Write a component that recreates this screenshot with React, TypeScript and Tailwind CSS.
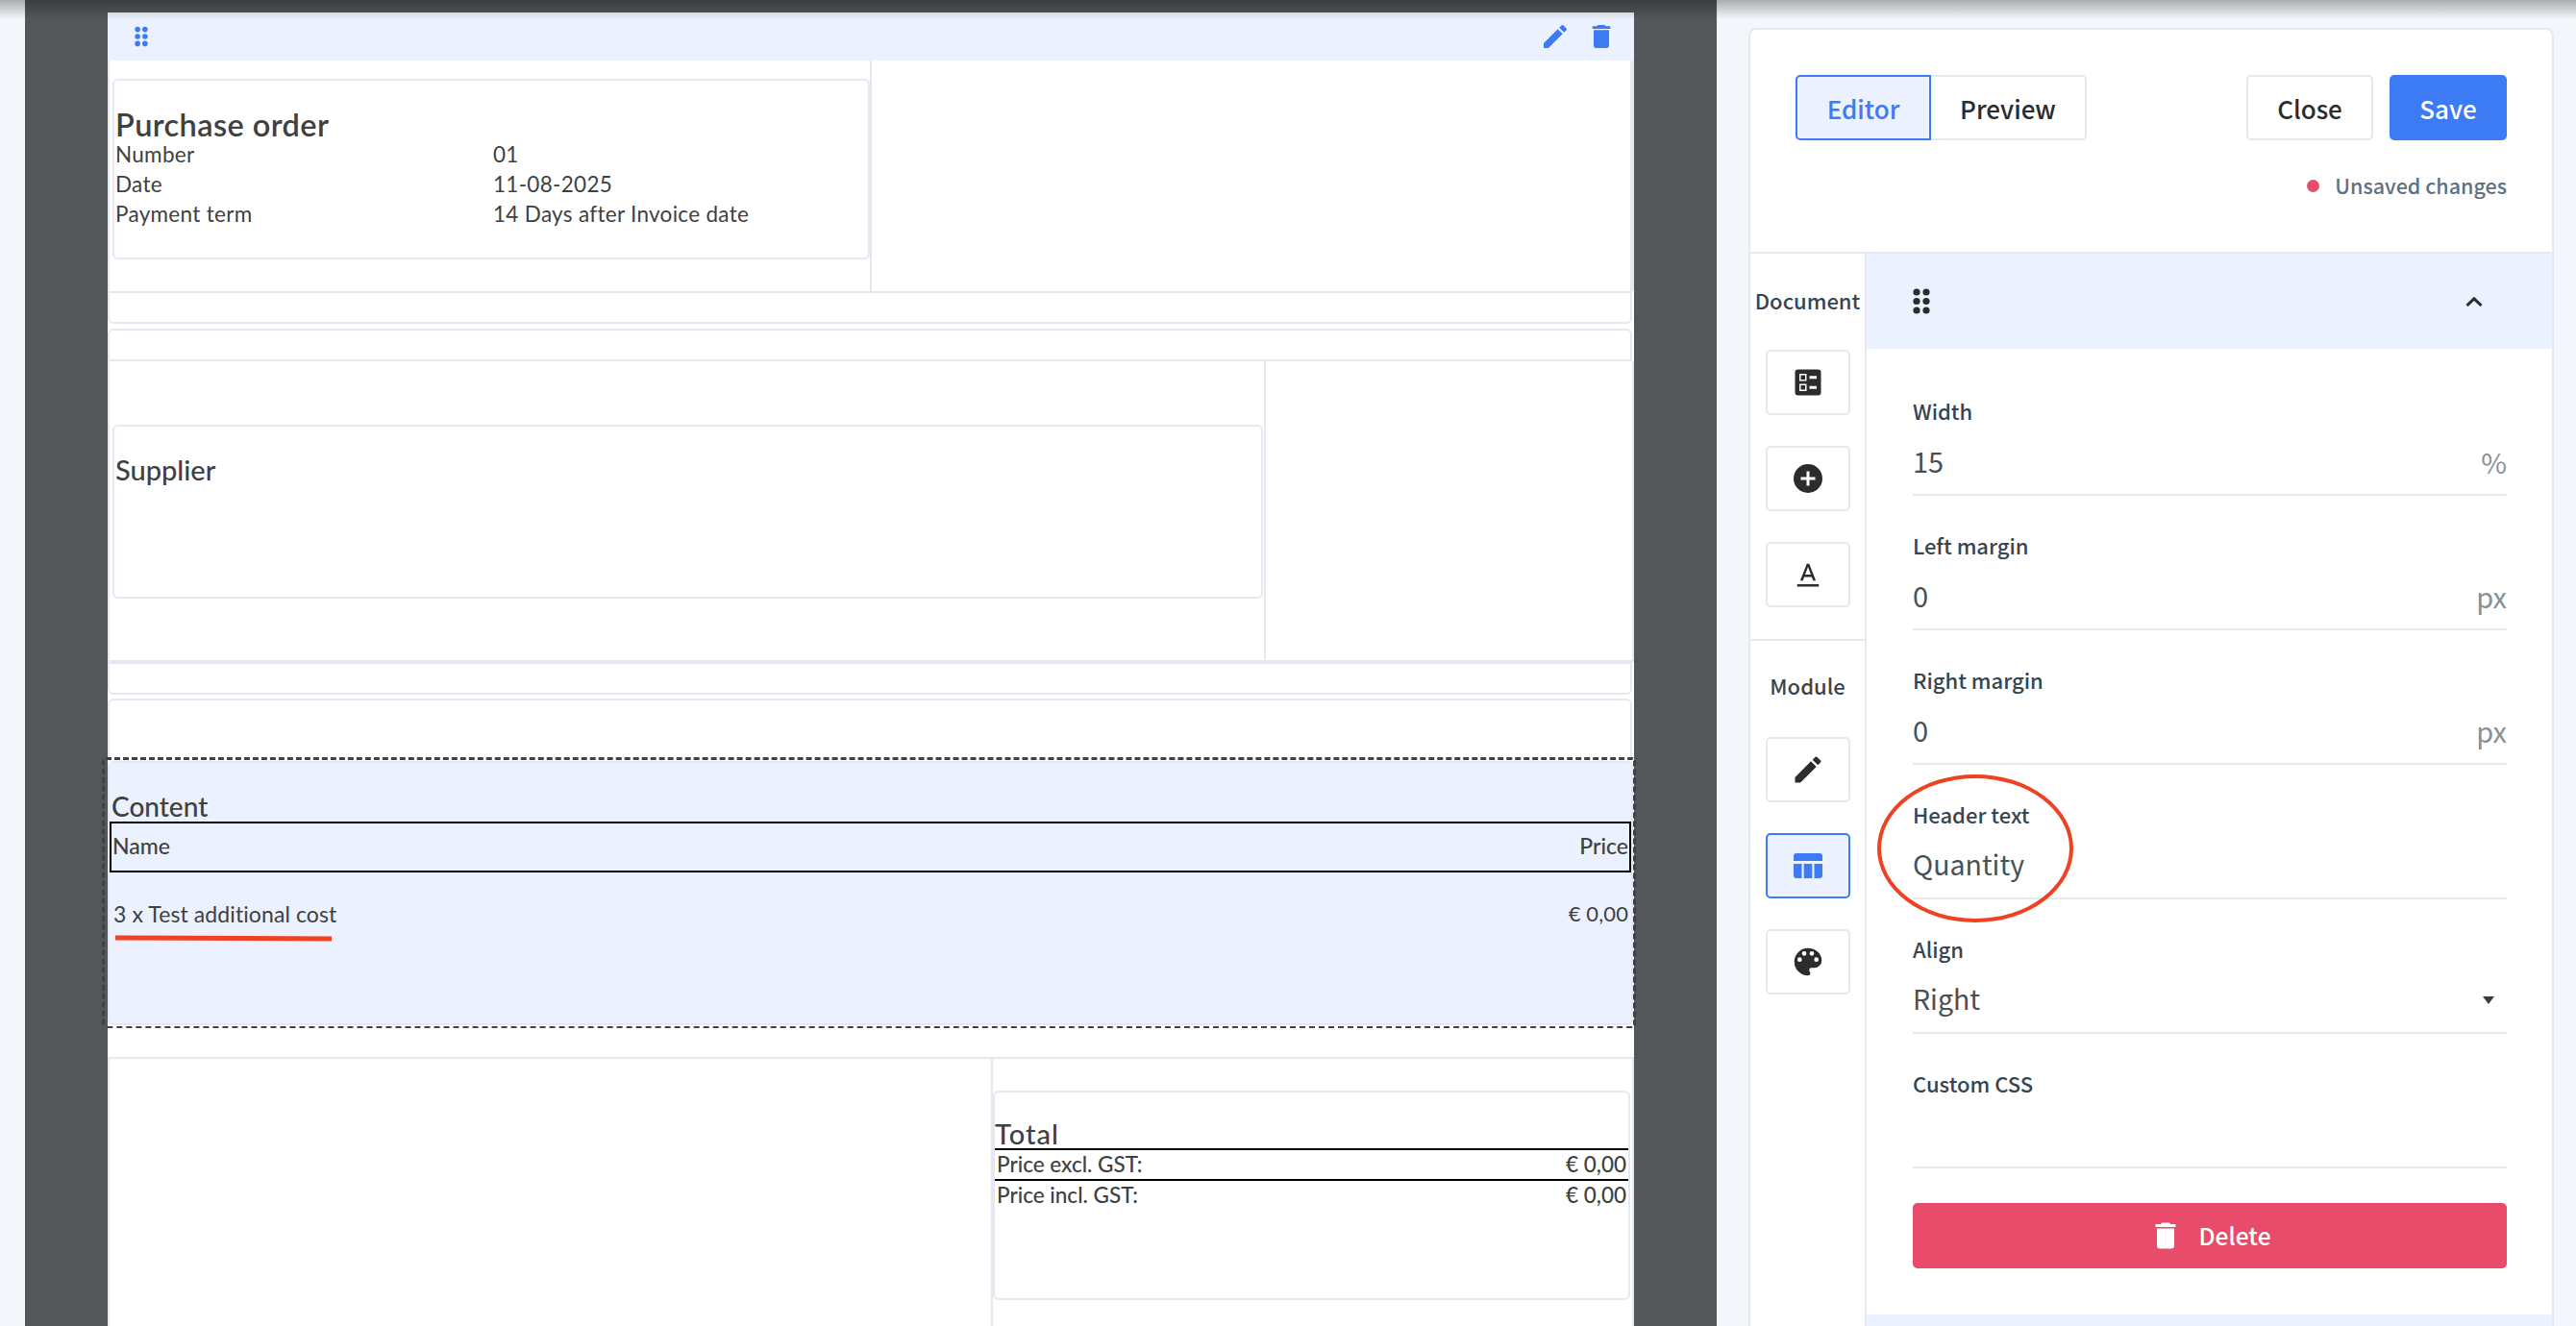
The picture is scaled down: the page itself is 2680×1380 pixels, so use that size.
import type { ReactNode } from "react";

const sans = "font-['Noto_Sans_CJK_SC',sans-serif]";

function DragDots({ className }: { className: string }) {
  return (
    <svg viewBox="0 0 18 27" className={className} fill="currentColor">
      {[4, 13.5, 23].map((y) => (
        <g key={y}>
          <circle cx="4" cy={y} r="3.6" />
          <circle cx="14" cy={y} r="3.6" />
        </g>
      ))}
    </svg>
  );
}

function PencilIcon({ className }: { className: string }) {
  return (
    <svg viewBox="0 0 24 24" className={className} fill="currentColor">
      <path d="M20.71,7.04C21.1,6.65 21.1,6 20.71,5.63L18.37,3.29C18,2.9 17.35,2.9 16.96,3.29L15.12,5.12L18.87,8.87M3,17.25V21H6.75L17.81,9.93L14.06,6.18L3,17.25Z" />
    </svg>
  );
}

function TrashIcon({ className }: { className: string }) {
  return (
    <svg viewBox="0 0 24 24" className={className} fill="currentColor">
      <path d="M19,4H15.5L14.5,3H9.5L8.5,4H5V6H19M6,19A2,2 0 0,0 8,21H16A2,2 0 0,0 18,19V7H6V19Z" />
    </svg>
  );
}

function SideButton({ active, children }: { active?: boolean; children: ReactNode }) {
  return (
    <div
      className={
        active
          ? "flex h-[68px] w-[88px] items-center justify-center rounded-[5px] border-2 border-[#3d7bf4] bg-[#ebf1fe] text-[#3d7bf4]"
          : "flex h-[68px] w-[88px] items-center justify-center rounded-[5px] border-2 border-[#e5e8ee] bg-white text-[#2a2c2e]"
      }
    >
      {children}
    </div>
  );
}

function Field({ label, value, unit, caret, big }: { label: string; value?: string; unit?: string; caret?: boolean; big?: boolean }) {
  return (
    <div>
      <div className="text-[22px] leading-[30px] font-medium text-[#36454f]">{label}</div>
      <div className="mt-[15px] flex h-[59px] items-start justify-between border-b-2 border-[#e5e8ee]">
        <span className={big ? "text-[28.5px] leading-[44px] text-[#4a4f54]" : "text-[29px] leading-[44px] text-[#4a4f54]"}>{value}</span>
        {unit && <span className="text-[29px] leading-[46px] text-[#8b8f92]">{unit}</span>}
        {caret && (
          <svg viewBox="0 0 12 8" className="mt-[20px] mr-[13px] h-[8px] w-[12px]" fill="#3a3d40">
            <path d="M0 0h12L6 8z" />
          </svg>
        )}
      </div>
    </div>
  );
}

function Spacer() {
  return <div className="mr-[2px] h-[34px] shrink-0 rounded-b-[6px] border-x-2 border-y-2 border-[#e5e8ee] bg-white" />;
}

export default function App() {
  return (
    <div className="relative flex h-[1380px] w-[2680px] overflow-hidden bg-[#f4f6fb]">
      <div className="pointer-events-none absolute inset-x-0 top-0 z-10 h-[20px] bg-gradient-to-b from-black/30 to-transparent" />

      <div className="w-[26px] shrink-0" />

      {/* document canvas */}
      <div className="h-full w-[1760px] shrink-0 bg-[#54575a] pt-[13px] pl-[86px] font-['Lato',sans-serif] text-[#404040]">
        <div className="flex h-[1367px] w-[1588px] flex-col bg-white">
          <div className="flex h-[50px] shrink-0 items-center justify-between bg-[#ebf1fe] pr-[18px] pl-[28px] text-[#3d7bf4]">
            <DragDots className="h-[24px] w-[14px]" />
            <div className="flex items-center gap-[16px]">
              <PencilIcon className="h-[32px] w-[32px]" />
              <TrashIcon className="h-[32px] w-[32px]" />
            </div>
          </div>

          <div className="flex h-[240px] shrink-0 border-r-4 border-l-2 border-[#e5e8ee]">
            <div className="w-[793px] border-r-2 border-[#e5e8ee] pt-[19px] pl-[3px]">
              <div className="h-[188px] rounded-[6px] border-2 border-[#e5e8ee] pt-[31px] pl-[1px]">
                <div className="text-[32.5px] leading-[30px] font-semibold tracking-[0.4px]">Purchase order</div>
                <div className="grid grid-cols-[393px_1fr] text-[22.5px] leading-[31px] tracking-[0.3px]">
                  <span>Number</span>
                  <span>01</span>
                  <span>Date</span>
                  <span>11-08-2025</span>
                  <span>Payment term</span>
                  <span>14 Days after Invoice date</span>
                </div>
              </div>
            </div>
          </div>

          <Spacer />
          <div className="mt-[5px] mr-[2px] h-[34px] shrink-0 rounded-t-[6px] border-x-2 border-y-2 border-[#e5e8ee] bg-white" />

          <div className="flex h-[313px] shrink-0 border-x-2 border-b-2 border-[#e5e8ee]">
            <div className="w-[1203px] border-r-2 border-[#e5e8ee] pt-[66px] pr-[1px] pl-[3px]">
              <div className="h-[181px] rounded-[6px] border-2 border-[#e5e8ee] pt-[27px] pl-[1px] text-[29px] leading-[36px] font-medium">
                Supplier
              </div>
            </div>
          </div>

          <Spacer />
          <div className="mt-[4px] mr-[2px] h-[61px] shrink-0 rounded-t-[6px] border-x-2 border-t-2 border-[#e5e8ee]" />

          {/* selected module */}
          <div className="-mr-[2px] -ml-[6px] h-[282px] shrink-0 rounded-[4px] border-[3px] border-b-2 border-dashed border-[#3f4245] pt-[1px] pb-[1px] pl-[3px]">
            <div className="h-full rounded-[6px] border-2 border-[#e5e8ee] bg-[#ebf1fe] pt-[30px]">
              <div className="pl-[2px] text-[28px] leading-[30px] font-medium">Content</div>
              <div className="mt-[1px] flex h-[53px] items-center justify-between border-2 border-black px-[1px] pb-[2px] text-[23px] font-medium">
                <span>Name</span>
                <span>Price</span>
              </div>
              <div className="mt-[28px] flex justify-between pr-[3px] pl-[4px] text-[23px] leading-[30px] tracking-[0.1px]">
                <span>3 x Test additional cost</span>
                <span className="text-[22px]">€ 0,00</span>
              </div>
            </div>
          </div>

          <div className="h-[30px] shrink-0" />

          <div className="flex flex-1 justify-end border-x-2 border-t-2 border-[#e5e8ee] pr-[2px]">
            <div className="w-[665px] border-l-2 border-[#e5e8ee] pt-[33px]">
              <div className="h-[218px] rounded-[6px] border-2 border-[#e5e8ee] pt-[29px]">
                <div className="text-[29px] leading-[28px] font-medium tracking-[1px]">Total</div>
                <div className="mt-[1px] flex h-[32px] items-center justify-between border-t-2 border-black px-[2px] text-[22.5px] font-medium">
                  <span>Price excl. GST:</span>
                  <span>€ 0,00</span>
                </div>
                <div className="flex h-[32px] items-center justify-between border-t-2 border-black px-[2px] text-[22.5px] font-medium">
                  <span>Price incl. GST:</span>
                  <span>€ 0,00</span>
                </div>
              </div>
            </div>
          </div>
        </div>
      </div>

      {/* editor panel */}
      <div className={`min-w-0 flex-1 pt-[29px] pr-[23px] pl-[33px] ${sans}`}>
        <div className="h-[1400px] rounded-[8px] border-2 border-[#e5e8ee] bg-white">
          <div className="h-[233px] border-b-2 border-[#e5e8ee] px-[47px] pt-[47px]">
            <div className="flex justify-between">
              <div className="flex h-[68px] text-[26px] font-medium">
                <div className="flex w-[141px] items-center justify-center rounded-l-[5px] border-2 border-[#3d7bf4] bg-[#ebf1fe] text-[#3d7bf4]">Editor</div>
                <div className="flex w-[162px] items-center justify-center rounded-r-[5px] border-y-2 border-r-2 border-[#e5e8ee] text-[#2a2c2e]">Preview</div>
              </div>
              <div className="flex h-[68px] gap-[17px] text-[26px] font-medium">
                <div className="flex w-[132px] items-center justify-center rounded-[5px] border-2 border-[#e5e8ee] text-[#2a2c2e]">Close</div>
                <div className="flex w-[122px] items-center justify-center rounded-[5px] bg-[#3d7bf4] text-white">Save</div>
              </div>
            </div>
            <div className="mt-[32px] flex items-center justify-end gap-[16px]">
              <span className="h-[13px] w-[13px] rounded-full bg-[#e94b6b]" />
              <span className="text-[21.5px] leading-[30px] font-medium text-[#5e7180]">Unsaved changes</span>
            </div>
          </div>

          <div className="flex">
            <div className="w-[119px] shrink-0">
              <div className="flex flex-col items-center gap-[32px] border-b-2 border-[#e5e8ee] pt-[33px] pb-[33px]">
                <div className="mb-[5px] text-[22px] leading-[30px] font-medium whitespace-nowrap text-[#36454f]">Document</div>
                <SideButton>
                  <svg viewBox="0 0 24 24" className="h-[36px] w-[36px]" fill="currentColor">
                    <path d="M13,9.5H18V7.5H13V9.5M13,16.5H18V14.5H13V16.5M19,21H5A2,2 0 0,1 3,19V5A2,2 0 0,1 5,3H19A2,2 0 0,1 21,5V19A2,2 0 0,1 19,21M6,11H11V6H6V11M7,7H10V10H7V7M6,18H11V13H6V18M7,14H10V17H7V14Z" fillRule="evenodd" />
                  </svg>
                </SideButton>
                <SideButton>
                  <svg viewBox="0 0 24 24" className="h-[36px] w-[36px]" fill="currentColor">
                    <path d="M17,13H13V17H11V13H7V11H11V7H13V11H17M12,2A10,10 0 0,0 2,12A10,10 0 0,0 12,22A10,10 0 0,0 22,12A10,10 0 0,0 12,2Z" />
                  </svg>
                </SideButton>
                <SideButton>
                  <svg viewBox="0 0 24 24" className="h-[30px] w-[30px]" fill="currentColor">
                    <path d="M9.62,12L12,5.67L14.38,12M11,3L5.5,17H7.75L8.87,14H15.12L16.25,17H18.5L13,3H11Z" />
                    <rect x="3" y="20" width="18" height="2" />
                  </svg>
                </SideButton>
              </div>
              <div className="flex flex-col items-center gap-[32px] pt-[31px]">
                <div className="mb-[7px] text-[22px] leading-[30px] font-medium text-[#36454f]">Module</div>
                <SideButton>
                  <PencilIcon className="h-[36px] w-[36px]" />
                </SideButton>
                <SideButton active>
                  <svg viewBox="0 0 30 26" className="h-[26px] w-[30px]" fill="currentColor">
                    <path d="M3 0h24a3 3 0 0 1 3 3v5H0V3a3 3 0 0 1 3-3z" />
                    <path d="M0 11h8.500v15H3a3 3 0 0 1-3-3zM10.700 11h8.600v15h-8.600zM21.500 11H30v12a3 3 0 0 1-3 3h-5.500z" />
                  </svg>
                </SideButton>
                <SideButton>
                  <svg viewBox="0 0 24 24" className="h-[38px] w-[38px]" fill="currentColor">
                    <path d="M17.5,12A1.5,1.5 0 0,1 16,10.5A1.5,1.5 0 0,1 17.5,9A1.5,1.5 0 0,1 19,10.5A1.5,1.5 0 0,1 17.5,12M14.5,8A1.5,1.5 0 0,1 13,6.5A1.5,1.5 0 0,1 14.5,5A1.5,1.5 0 0,1 16,6.5A1.5,1.5 0 0,1 14.5,8M9.5,8A1.5,1.5 0 0,1 8,6.5A1.5,1.5 0 0,1 9.5,5A1.5,1.5 0 0,1 11,6.5A1.5,1.5 0 0,1 9.5,8M6.5,12A1.5,1.5 0 0,1 5,10.5A1.5,1.5 0 0,1 6.5,9A1.5,1.5 0 0,1 8,10.5A1.5,1.5 0 0,1 6.5,12M12,3A9,9 0 0,0 3,12A9,9 0 0,0 12,21A1.5,1.5 0 0,0 13.5,19.5C13.5,19.11 13.35,18.76 13.11,18.5C12.88,18.23 12.73,17.88 12.73,17.5A1.5,1.5 0 0,1 14.23,16H16A5,5 0 0,0 21,11C21,6.58 16.97,3 12,3Z" />
                  </svg>
                </SideButton>
              </div>
            </div>

            <div className="min-w-0 flex-1 border-l-2 border-[#e5e8ee]">
              <div className="flex h-[99px] items-center justify-between bg-[#ebf1fe] pr-[72px] pl-[48px] text-[#2a2c2e]">
                <DragDots className="h-[27px] w-[18px]" />
                <svg viewBox="0 0 18 10" className="h-[10px] w-[18px]" fill="none" stroke="currentColor" strokeWidth="3">
                  <path d="M1.500 9L9 1.800 16.500 9" />
                </svg>
              </div>
              <div className="flex flex-col gap-[36px] pt-[49px] pr-[47px] pl-[48px]">
                <Field label="Width" value="15" unit="%" />
                <Field label="Left margin" value="0" unit="px" />
                <Field label="Right margin" value="0" unit="px" />
                <Field label="Header text" value="Quantity" big />
                <Field label="Align" value="Right" caret big />
                <Field label="Custom CSS" />
                <div className="flex h-[68px] items-center justify-center gap-[16px] rounded-[5px] bg-[#e94b6b] text-[24.5px] font-medium text-white">
                  <TrashIcon className="h-[36px] w-[36px]" />
                  <span>Delete</span>
                </div>
              </div>
              <div className="mt-[48px] h-[60px] bg-[#ebf1fe]" />
            </div>
          </div>
        </div>
      </div>

      {/* red annotation marks */}
      <div className="absolute top-[974px] left-[120px] h-[5px] w-[225px] rotate-[0.25deg] bg-[#ef4123]" />
      <div className="absolute top-[806px] left-[1953px] h-[154px] w-[204px] rounded-[50%] border-4 border-[#ef4123]" />
    </div>
  );
}
